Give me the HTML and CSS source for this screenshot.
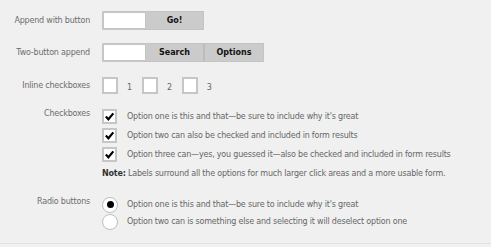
FILE: index.html
```html
<!DOCTYPE html>
<html>
<head>
<meta charset="utf-8">
<link rel="stylesheet" href="styles.css">
</head>
<body>
<form class="form">
  <div class="row r1">
    <div class="lbl">Append with button</div>
    <div class="ctl group">
      <span class="input"></span><span class="btn go">Go!</span>
    </div>
  </div>
  <div class="row r2">
    <div class="lbl">Two-button append</div>
    <div class="ctl group">
      <span class="input"></span><span class="btn search">Search</span><span class="btn options">Options</span>
    </div>
  </div>
  <div class="row r3">
    <div class="lbl">Inline checkboxes</div>
    <div class="ctl inline">
      <span class="ibox"></span><span class="inum">1</span>
      <span class="ibox"></span><span class="inum">2</span>
      <span class="ibox"></span><span class="inum">3</span>
    </div>
  </div>
  <div class="row r4">
    <div class="lbl lbl-top">Checkboxes</div>
    <div class="ctl list">
      <div class="opt"><span class="cbox"><svg width="13" height="13" viewBox="0 0 13 13"><path d="M2.2 6.6 L5.2 9.8 L11 2.8" fill="none" stroke="#000" stroke-width="2.6"/></svg></span><span>Option one is this and that—be sure to include why it's great</span></div>
      <div class="opt"><span class="cbox"><svg width="13" height="13" viewBox="0 0 13 13"><path d="M2.2 6.6 L5.2 9.8 L11 2.8" fill="none" stroke="#000" stroke-width="2.6"/></svg></span><span>Option two can also be checked and included in form results</span></div>
      <div class="opt"><span class="cbox"><svg width="13" height="13" viewBox="0 0 13 13"><path d="M2.2 6.6 L5.2 9.8 L11 2.8" fill="none" stroke="#000" stroke-width="2.6"/></svg></span><span>Option three can—yes, you guessed it—also be checked and included in form results</span></div>
      <p class="note"><b>Note:</b> Labels surround all the options for much larger click areas and a more usable form.</p>
    </div>
  </div>
  <div class="row r5">
    <div class="lbl lbl-top">Radio buttons</div>
    <div class="ctl list radios">
      <div class="ropt"><span class="radio on"></span><span>Option one is this and that—be sure to include why it's great</span></div>
      <div class="ropt"><span class="radio"></span><span>Option two can is something else and selecting it will deselect option one</span></div>
    </div>
  </div>
</form>
</body>
</html>
```
FILE: styles.css
```css
html {
  margin: 0;
  padding: 0;
  background: #f1f1f1;
}
body {
  margin: 0;
  padding: 0;
  background: #f0f0f0;
  width: 491px;
  height: 244px;
  overflow: hidden;
  font-family: "DejaVu Sans", "Liberation Sans", sans-serif;
  font-size: 8px;
  letter-spacing: -0.2px;
  color: #666;
  border-bottom: 1px solid #e2e2e2;
  box-sizing: border-box;
}
.form {
  padding-top: 11px;
}
.row {
  display: grid;
  grid-template-columns: 90px 1fr;
  column-gap: 12px;
  align-items: center;
}
.lbl {
  text-align: right;
  color: #6d6d6d;
  white-space: nowrap;
}
.lbl-top {
  align-self: start;
}
.r2 { margin-top: 13px; }
.r3 { margin-top: 15px; }
.r4 { margin-top: 16px; }
.r5 { margin-top: 16px; }

.group {
  display: flex;
  height: 19px;
}
.input {
  width: 41px;
  height: 15px;
  background: #fff;
  border: 2px solid #c6c6c6;
  border-right: none;
  border-radius: 2px 0 0 2px;
}
.btn {
  display: flex;
  align-items: center;
  justify-content: center;
  height: 17px;
  background: #cbcbcb;
  border: 1px solid #c4c4c4;
  color: #111;
  font-weight: bold;
  letter-spacing: 0;
}
.go { width: 57px; }
.search { width: 57px; border-right-color: #bcbcbc; }
.options { width: 58px; border-left: 1px solid #bdbdbd; }

.inline {
  display: flex;
  align-items: center;
  height: 16px;
}
.ibox {
  width: 12px;
  height: 13px;
  background: #fff;
  border: 2px solid #c6c6c6;
}
.inum {
  margin: 4px 10px 0 9px;
  font-size: 8px;
}

.list {
  display: flex;
  flex-direction: column;
}
.opt {
  display: flex;
  align-items: center;
  height: 15px;
  margin-bottom: 4px;
  white-space: nowrap;
}
.cbox {
  width: 11px;
  height: 11px;
  margin-right: 10px;
  background: #fff;
  border: 2px solid #c6c6c6;
  display: flex;
  align-items: center;
  justify-content: center;
  flex: none;
}
.cbox svg { display: block; }
.note {
  margin: 0;
  margin-top: 1px;
  height: 14px;
  line-height: 14px;
  white-space: nowrap;
}
.note b { color: #333; }

.ropt {
  display: flex;
  align-items: center;
  height: 15px;
  margin-bottom: 2px;
  white-space: nowrap;
}
.radio {
  width: 14px;
  height: 14px;
  border-radius: 50%;
  background: #fff;
  border: 1px solid #bdbdbd;
  margin-right: 9px;
  display: flex;
  align-items: center;
  justify-content: center;
  flex: none;
}
.radio.on::after {
  content: "";
  width: 7px;
  height: 7px;
  border-radius: 50%;
  background: #000;
}
```
